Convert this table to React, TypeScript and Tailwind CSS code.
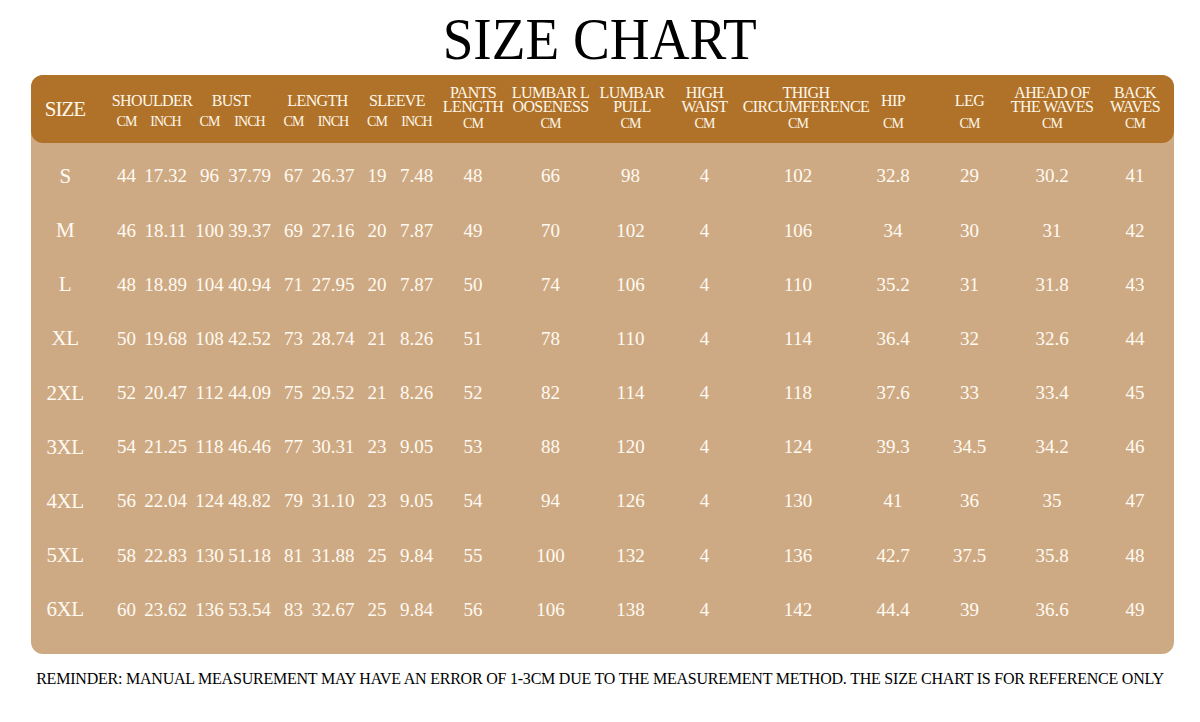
const serif = { fontFamily: '"Liberation Serif", "Times New Roman", serif' };

const rows = [
  ["S", "44", "17.32", "96", "37.79", "67", "26.37", "19", "7.48", "48", "66", "98", "4", "102", "32.8", "29", "30.2", "41"],
  ["M", "46", "18.11", "100", "39.37", "69", "27.16", "20", "7.87", "49", "70", "102", "4", "106", "34", "30", "31", "42"],
  ["L", "48", "18.89", "104", "40.94", "71", "27.95", "20", "7.87", "50", "74", "106", "4", "110", "35.2", "31", "31.8", "43"],
  ["XL", "50", "19.68", "108", "42.52", "73", "28.74", "21", "8.26", "51", "78", "110", "4", "114", "36.4", "32", "32.6", "44"],
  ["2XL", "52", "20.47", "112", "44.09", "75", "29.52", "21", "8.26", "52", "82", "114", "4", "118", "37.6", "33", "33.4", "45"],
  ["3XL", "54", "21.25", "118", "46.46", "77", "30.31", "23", "9.05", "53", "88", "120", "4", "124", "39.3", "34.5", "34.2", "46"],
  ["4XL", "56", "22.04", "124", "48.82", "79", "31.10", "23", "9.05", "54", "94", "126", "4", "130", "41", "36", "35", "47"],
  ["5XL", "58", "22.83", "130", "51.18", "81", "31.88", "25", "9.84", "55", "100", "132", "4", "136", "42.7", "37.5", "35.8", "48"],
  ["6XL", "60", "23.62", "136", "53.54", "83", "32.67", "25", "9.84", "56", "106", "138", "4", "142", "44.4", "39", "36.6", "49"],
];

// small nudges so each column's text sits where the chart has it
const pad = [
  "", "pl-[8px]", "pr-[3px]", "pl-[1px]", "pr-[2px]", "pl-[3px]", "pr-[2px]", "pl-[2px]", "",
  "", "", "", "", "", "", "", "", "pl-[2px]",
];

const cols =
  "grid grid-cols-[68px_47px_42px_42px_41px_42px_42px_42px_39px_74px_81px_79px_69px_118px_72px_81px_84px_80px]";

const groups = [
  { title: "SHOULDER", nudge: "pl-[17px]", first: 1 },
  { title: "BUST", nudge: "pl-[3px]", first: 3 },
  { title: "LENGTH", nudge: "pl-[9px]", first: 5 },
  { title: "SLEEVE", nudge: "pl-[3px]", first: 7 },
];

const singles = [
  { lines: ["PANTS", "LENGTH"], nudge: "" },
  { lines: ["LUMBAR L", "OOSENESS"], nudge: "" },
  { lines: ["LUMBAR", "PULL"], nudge: "pl-[3px]" },
  { lines: ["HIGH", "WAIST"], nudge: "" },
  { lines: ["THIGH", "CIRCUMFERENCE"], nudge: "pl-[16px]" },
  { lines: ["HIP"], nudge: "" },
  { lines: ["LEG"], nudge: "" },
  { lines: ["AHEAD OF", "THE WAVES"], nudge: "" },
  { lines: ["BACK", "WAVES"], nudge: "" },
];

function Header() {
  return (
    <div className={`${cols} h-[68px] rounded-[12px] bg-[#af7228] text-[#fff7ea]`}>
      <div className="flex items-center justify-center text-[21px] tracking-[-1px] leading-[20px]">SIZE</div>
      {groups.map((g) => (
        <div key={g.title} className="col-span-2 grid grid-cols-subgrid content-start pt-[19px]">
          <div className={`col-span-2 flex justify-center whitespace-nowrap text-[16px] tracking-[-0.6px] leading-[14px] ${g.nudge}`}>
            {g.title}
          </div>
          <div className={`mt-[7px] flex justify-center text-[14px] tracking-[-0.9px] leading-[14px] ${pad[g.first]}`}>CM</div>
          <div className={`mt-[7px] flex justify-center text-[14px] tracking-[-0.9px] leading-[14px] ${pad[g.first + 1]}`}>INCH</div>
        </div>
      ))}
      {singles.map((s, i) => (
        <div
          key={s.lines.join(" ")}
          className={`flex flex-col items-center ${s.lines.length > 1 ? "pt-[11px]" : "pt-[19px]"} ${pad[9 + i]}`}
        >
          {s.lines.map((l) => (
            <div key={l} className={`whitespace-nowrap text-[16px] tracking-[-0.6px] leading-[14px] ${s.nudge}`}>
              {l}
            </div>
          ))}
          <div
            className={`text-[14px] tracking-[-0.9px] leading-[14px] ${s.lines.length > 1 ? "mt-[3px]" : "mt-[9px]"}`}
          >
            CM
          </div>
        </div>
      ))}
    </div>
  );
}

export default function App() {
  return (
    <div className="w-[1200px] h-[722px] bg-white" style={serif}>
      <div className="h-[75px] pt-[9px] flex justify-center">
        <h1 className="text-[60px] leading-[60px] text-black scale-x-[0.92]">SIZE CHART</h1>
      </div>

      <div className="ml-[31px] w-[1143px] h-[579px] rounded-[12px] bg-[#ceaa84]">
        <Header />
        <div className="pt-[6.5px] text-[#fffaf2]">
          {rows.map((r) => (
            <div key={r[0]} className={`${cols} h-[54.2px]`}>
              {r.map((v, i) => (
                <div
                  key={i}
                  className={`flex items-center justify-center whitespace-nowrap ${
                    i === 0 ? "text-[21px] tracking-[-0.5px]" : "text-[19px]"
                  } ${pad[i]}`}
                >
                  {v}
                </div>
              ))}
            </div>
          ))}
        </div>
      </div>

      <p className="mt-[14.7px] text-center text-[16px] tracking-[-0.22px] leading-[20px] text-black whitespace-nowrap">
        REMINDER: MANUAL MEASUREMENT MAY HAVE AN ERROR OF 1-3CM DUE TO THE MEASUREMENT METHOD. THE SIZE CHART IS FOR REFERENCE ONLY
      </p>
    </div>
  );
}
